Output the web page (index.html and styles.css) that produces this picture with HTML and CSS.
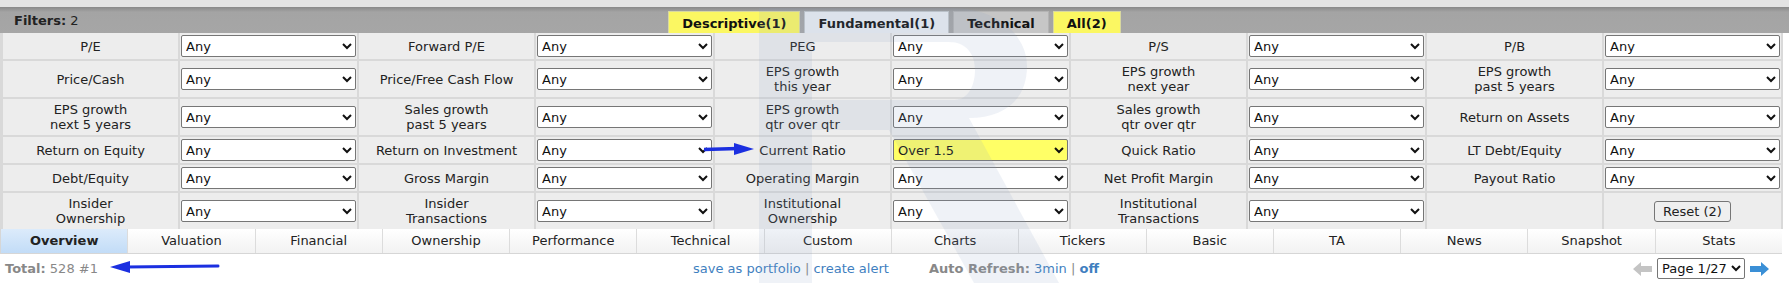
FILE: index.html
```html
<!DOCTYPE html>
<html lang="en">
<head>
  <meta charset="UTF-8" />
  <title>Screener - Fundamental filters</title>
  <link rel="stylesheet" href="styles.css">
</head>
<body>
  <div class="screener">
    <div class="topstrip"></div>

    <div class="filterbar">
      <div class="count"><b>Filters:</b> 2</div>
      <div class="ftabs">
        <span class="ftab on-filter">Descriptive(1)</span>
        <span class="ftab current">Fundamental(1)</span>
        <span class="ftab">Technical</span>
        <span class="ftab on-filter">All(2)</span>
      </div>
    </div>

    <div class="filters">
      <div class="lbl">P/E</div><div class="fld"><select><option>Any</option></select></div>
      <div class="lbl">Forward P/E</div><div class="fld"><select><option>Any</option></select></div>
      <div class="lbl">PEG</div><div class="fld"><select><option>Any</option></select></div>
      <div class="lbl">P/S</div><div class="fld"><select><option>Any</option></select></div>
      <div class="lbl">P/B</div><div class="fld"><select><option>Any</option></select></div>

      <div class="lbl">Price/Cash</div><div class="fld"><select><option>Any</option></select></div>
      <div class="lbl">Price/Free Cash Flow</div><div class="fld"><select><option>Any</option></select></div>
      <div class="lbl">EPS growth<br>this year</div><div class="fld"><select><option>Any</option></select></div>
      <div class="lbl">EPS growth<br>next year</div><div class="fld"><select><option>Any</option></select></div>
      <div class="lbl">EPS growth<br>past 5 years</div><div class="fld"><select><option>Any</option></select></div>

      <div class="lbl">EPS growth<br>next 5 years</div><div class="fld"><select><option>Any</option></select></div>
      <div class="lbl">Sales growth<br>past 5 years</div><div class="fld"><select><option>Any</option></select></div>
      <div class="lbl">EPS growth<br>qtr over qtr</div><div class="fld"><select><option>Any</option></select></div>
      <div class="lbl">Sales growth<br>qtr over qtr</div><div class="fld"><select><option>Any</option></select></div>
      <div class="lbl">Return on Assets</div><div class="fld"><select><option>Any</option></select></div>

      <div class="lbl">Return on Equity</div><div class="fld"><select><option>Any</option></select></div>
      <div class="lbl">Return on Investment</div><div class="fld"><select><option>Any</option></select></div>
      <div class="lbl">Current Ratio</div><div class="fld"><select class="active"><option>Over 1.5</option></select></div>
      <div class="lbl">Quick Ratio</div><div class="fld"><select><option>Any</option></select></div>
      <div class="lbl">LT Debt/Equity</div><div class="fld"><select><option>Any</option></select></div>

      <div class="lbl">Debt/Equity</div><div class="fld"><select><option>Any</option></select></div>
      <div class="lbl">Gross Margin</div><div class="fld"><select><option>Any</option></select></div>
      <div class="lbl">Operating Margin</div><div class="fld"><select><option>Any</option></select></div>
      <div class="lbl">Net Profit Margin</div><div class="fld"><select><option>Any</option></select></div>
      <div class="lbl">Payout Ratio</div><div class="fld"><select><option>Any</option></select></div>

      <div class="lbl">Insider<br>Ownership</div><div class="fld"><select><option>Any</option></select></div>
      <div class="lbl">Insider<br>Transactions</div><div class="fld"><select><option>Any</option></select></div>
      <div class="lbl">Institutional<br>Ownership</div><div class="fld"><select><option>Any</option></select></div>
      <div class="lbl">Institutional<br>Transactions</div><div class="fld"><select><option>Any</option></select></div>
      <div class="lbl"></div><div class="fld center"><button class="reset">Reset (2)</button></div>
    </div>

    <div class="views">
      <span class="view current">Overview</span>
      <span class="view">Valuation</span>
      <span class="view">Financial</span>
      <span class="view">Ownership</span>
      <span class="view">Performance</span>
      <span class="view">Technical</span>
      <span class="view">Custom</span>
      <span class="view">Charts</span>
      <span class="view">Tickers</span>
      <span class="view">Basic</span>
      <span class="view">TA</span>
      <span class="view">News</span>
      <span class="view">Snapshot</span>
      <span class="view">Stats</span>
    </div>

    <div class="footer">
      <div class="total"><b>Total:</b> 528 #1</div>
      <div class="links">
        <a href="#">save as portfolio</a> | <a href="#">create alert</a>
        <span class="refresh"><b>Auto Refresh:</b> <a href="#">3min</a> | <a href="#" class="strong">off</a></span>
      </div>
      <div class="pager">
        <svg class="parrow" width="19" height="14" viewBox="0 0 19 14"><polygon points="0,7 8,0 8,4 19,4 19,10 8,10 8,14" fill="#c4c4c4"/></svg>
        <select class="page"><option>Page 1/27</option></select>
        <svg class="parrow" width="19" height="14" viewBox="0 0 19 14"><polygon points="19,7 11,0 11,4 0,4 0,10 11,10 11,14" fill="#3a8fd6"/></svg>
      </div>
    </div>
    <div class="bottomstrip"></div>

    <!-- watermark over the page -->
    <svg class="watermark" width="300" height="283" viewBox="0 0 300 283">
      <path d="M0 8 H190 C245 8 268 40 268 66 C268 100 245 118 210 118 L300 283 H215 L130 130 H53 V283 H0 Z M53 42 V100 H195 C210 100 216 84 216 70 C216 55 208 42 190 42 Z" fill="rgb(140,160,195)" fill-rule="evenodd" opacity="0.14"/>
    </svg>

    <!-- annotation arrows -->
    <svg class="arrow arrow-ratio" width="50" height="12" viewBox="0 0 50 12">
      <path d="M0 6.5 L34 5.5" stroke="#1b2fe0" stroke-width="3.5" stroke-linecap="round"/>
      <polygon points="30,0 50,6 30,12" fill="#1b2fe0"/>
    </svg>
    <svg class="arrow arrow-total" width="110" height="12" viewBox="0 0 110 12">
      <path d="M16 6 L108 5" stroke="#1b2fe0" stroke-width="3" stroke-linecap="round"/>
      <polygon points="0,6 20,0 20,12" fill="#1b2fe0"/>
    </svg>
  </div>
</body>
</html>
```

FILE: styles.css
```css
body {
  margin: 0;
  background: #fff;
  font-family: 'DejaVu Sans', Verdana, sans-serif;
  font-size: 13px;
  color: #222;
}

.screener {
  position: relative;
  width: 1789px;
  height: 283px;
  overflow: hidden;
}

.topstrip {
  height: 7px;
  background: #e3e3e3;
}

.filterbar {
  position: relative;
  height: 26px;
  background: linear-gradient(#888 0, #a4a4a4 5px, #a6a6a6 100%);
  display: flex;
  align-items: flex-end;
  justify-content: center;
}

.count {
  position: absolute;
  left: 14px;
  top: 6px;
  color: #222;
}

.ftabs {
  display: flex;
  gap: 4px;
}

.ftab {
  height: 22px;
  line-height: 23px;
  padding: 0 13px;
  font-weight: bold;
  background: #c6c6c6;
  border: 1px solid #b4b4b4;
  border-bottom: none;
  color: #111;
  box-sizing: border-box;
}

.ftab.on-filter {
  background: #fbf762;
  border-color: #d8d8a0;
}

.ftab.current {
  background: #e9edf1;
  border-color: #c2c6ca;
}

.filters {
  display: grid;
  grid-template-columns: repeat(5, 175px 177px);
  gap: 2px;
  padding: 0 1px 0 3px;
  width: 1783px;
  box-sizing: border-box;
  background: #d9d9d9;
}

.lbl {
  background: #ededed;
  text-align: center;
  line-height: 15px;
  padding: 3px 2px;
  display: flex;
  align-items: center;
  justify-content: center;
  color: #222;
}

.fld {
  background: #ededed;
  display: flex;
  align-items: center;
  padding: 2px 1px;
}

.fld.center {
  justify-content: center;
}

.fld select {
  width: 100%;
  height: 22px;
  font-family: 'DejaVu Sans', Verdana, sans-serif;
  font-size: 13px;
  color: #111;
  background: #fff;
  border: 1px solid #767676;
  border-radius: 2px;
}

.fld select.active {
  background: #ffff66;
}

.reset {
  font-family: 'DejaVu Sans', Verdana, sans-serif;
  font-size: 13px;
  height: 21px;
  padding: 0 8px;
  color: #222;
  background: #efefef;
  border: 1px solid #767676;
  border-radius: 3px;
}

.views {
  display: grid;
  grid-template-columns: repeat(14, 1fr);
  width: 1782px;
  height: 25px;
  border-bottom: 1px solid #d6d6d6;
  box-sizing: border-box;
}

.view {
  text-align: center;
  line-height: 24px;
  background: linear-gradient(#fff, #f2f2f2);
  border-left: 1px solid #dcdcdc;
  color: #222;
}

.view:first-child {
  border-left: 1px solid #d6d6d6;
}

.view.current {
  font-weight: bold;
  background: linear-gradient(#dcebfb, #c2dcf7);
}

.footer {
  display: grid;
  grid-template-columns: 1fr auto 1fr;
  align-items: center;
  height: 29px;
  padding: 0 20px 0 5px;
  color: #888;
}

.footer a {
  color: #3f7fc0;
  text-decoration: none;
}

.footer a.strong {
  font-weight: bold;
}

.links {
  padding-left: 18px;
}

.refresh {
  margin-left: 36px;
}

.pager {
  display: flex;
  justify-content: flex-end;
  align-items: center;
  gap: 5px;
}

.page {
  width: 88px;
  height: 21px;
  font-family: 'DejaVu Sans', Verdana, sans-serif;
  font-size: 13px;
  color: #111;
  border: 1px solid #767676;
  border-radius: 2px;
  background: #fff;
}

.bottomstrip {
  height: 3px;
  background: #dedede;
}

.watermark {
  position: absolute;
  left: 759px;
  top: 0;
  pointer-events: none;
}

.arrow {
  position: absolute;
}

.arrow-ratio {
  left: 704px;
  top: 143px;
}

.arrow-total {
  left: 110px;
  top: 261px;
}
```
